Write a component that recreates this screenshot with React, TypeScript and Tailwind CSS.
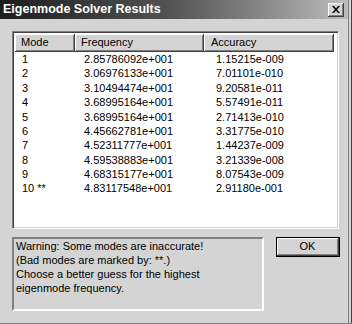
const rows = [
	["1", "2.85786092e+001", "1.15215e-009"],
	["2", "3.06976133e+001", "7.01101e-010"],
	["3", "3.10494474e+001", "9.20581e-011"],
	["4", "3.68995164e+001", "5.57491e-011"],
	["5", "3.68995164e+001", "2.71413e-010"],
	["6", "4.45662781e+001", "3.31775e-010"],
	["7", "4.52311777e+001", "1.44237e-009"],
	["8", "4.59538883e+001", "3.21339e-008"],
	["9", "4.68315177e+001", "8.07543e-009"],
	["10 **", "4.83117548e+001", "2.91180e-001"],
];

const raised =
	"bg-[#d4d4d4] border-r border-b border-r-[#404040] border-b-[#404040] shadow-[inset_1px_1px_0_#ffffff,inset_-1px_-1px_0_#808080]";

const App = () => {
	return (
		<div className="w-[352px] h-[324px] bg-[#d4d4d4] overflow-hidden font-['Liberation_Sans',Arial,sans-serif] text-[11px] text-black flex border-b border-b-[#808080]">
			<div className="w-[348px] h-[323px] flex flex-col">
				{/* title bar */}
				<div className="h-[19px] bg-gradient-to-r from-[#1e1e1e] via-[#555555] to-[#bdbdbd] flex items-center justify-between pl-[3px] pr-[4px]">
					<span className="text-white font-bold text-[12.5px] leading-none">
						Eigenmode Solver Results
					</span>
					<div className={`w-[16px] h-[14px] flex items-center justify-center ${raised}`}>
						<svg width="8" height="7" viewBox="0 0 8 7">
							<path d="M0 0h2l2 2.5L6 0h2L5 3.5 8 7H6L4 4.5 2 7H0l3-3.5z" fill="#000" />
						</svg>
					</div>
				</div>

				<div className="flex flex-col pt-[12px] pl-[12px]">
					{/* list */}
					<div className="w-[327px] h-[198px] bg-white border border-t-[#808080] border-l-[#808080] border-r-white border-b-white shadow-[inset_1px_1px_0_#404040,inset_-1px_-1px_0_#d4d4d4] p-[1px]">
						<div className="flex h-[18px] w-[319px] ml-[1px] mt-[1px]">
							<div className={`w-[60px] pl-[6px] flex items-center ${raised}`}>Mode</div>
							<div className={`w-[129px] pl-[6px] flex items-center ${raised}`}>Frequency</div>
							<div className={`w-[130px] pl-[7px] flex items-center ${raised}`}>Accuracy</div>
						</div>
						{rows.map(([m, f, a]) => (
							<div key={m} className="flex h-[14.4px] items-center ml-[1px]">
								<div className="w-[60px] pl-[7px]">{m}</div>
								<div className="w-[129px] pl-[9px]">{f}</div>
								<div className="w-[130px] pl-[12px]">{a}</div>
							</div>
						))}
					</div>

					<div className="flex mt-[8px]">
						<div className="w-[252px] h-[74px] border-2 border-t-[#808080] border-l-[#808080] border-r-white border-b-white pl-[2px] leading-[14px]">
							<p>Warning: Some modes are inaccurate!</p>
							<p>(Bad modes are marked by: **.)</p>
							<p>Choose a better guess for the highest</p>
							<p>eigenmode frequency.</p>
						</div>
						<div className="ml-[12px] w-[64px] h-[20px] border border-black">
							<div className={`w-full h-full flex items-center justify-center ${raised}`}>OK</div>
						</div>
					</div>
				</div>
			</div>
			<div className="w-[4px] h-[323px] bg-[#d4d4d4] border-l border-l-[#808080] border-r border-r-[#404040]" />
		</div>
	);
};

export default App;
